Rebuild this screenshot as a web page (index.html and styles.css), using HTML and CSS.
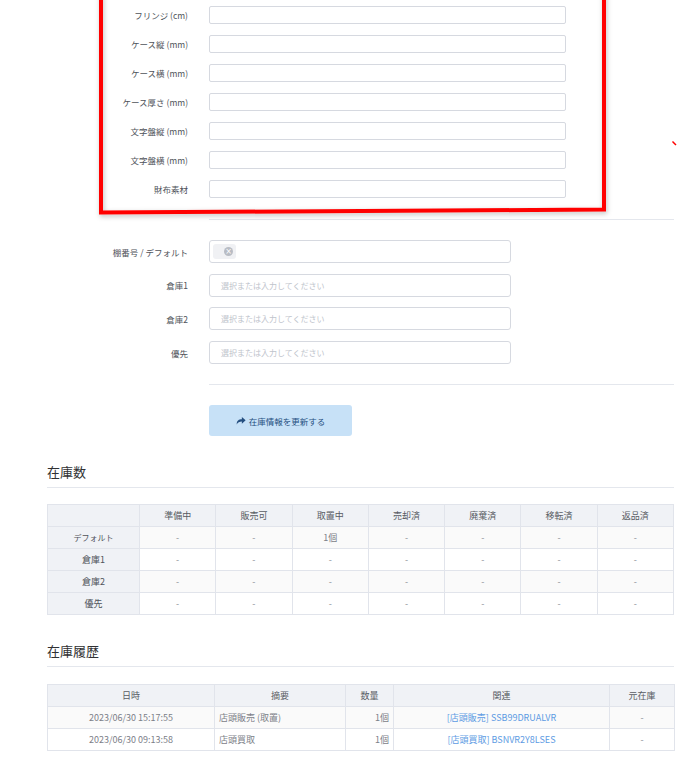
FILE: index.html
```html
<!DOCTYPE html>
<html>
<head>
    <title>在庫情報</title>
    <meta charset="utf-8">
    <link rel="stylesheet" href="styles.css">
</head>
<body>
    <div class="page">
        <!-- 仕様 -->
        <div class="spec-form">
            <div class="form-row"><label>フリンジ (cm)</label><input type="text"></div>
            <div class="form-row"><label>ケース縦 (mm)</label><input type="text"></div>
            <div class="form-row"><label>ケース横 (mm)</label><input type="text"></div>
            <div class="form-row"><label>ケース厚さ (mm)</label><input type="text"></div>
            <div class="form-row"><label>文字盤縦 (mm)</label><input type="text"></div>
            <div class="form-row"><label>文字盤横 (mm)</label><input type="text"></div>
            <div class="form-row"><label>財布素材</label><input type="text"></div>
        </div>

        <div class="divider"></div>

        <!-- 棚番号 -->
        <div class="stock-form">
            <div class="form-row">
                <label>棚番号 / デフォルト</label>
                <div class="select-box">
                    <span class="tag"><span class="tag-close">×</span></span>
                </div>
            </div>
            <div class="form-row">
                <label>倉庫1</label>
                <div class="select-box"><span class="placeholder">選択または入力してください</span></div>
            </div>
            <div class="form-row">
                <label>倉庫2</label>
                <div class="select-box"><span class="placeholder">選択または入力してください</span></div>
            </div>
            <div class="form-row">
                <label>優先</label>
                <div class="select-box"><span class="placeholder">選択または入力してください</span></div>
            </div>
        </div>

        <div class="divider"></div>

        <div class="button-row">
            <button class="update-btn">
                <svg width="10" height="9" viewBox="0 0 14 12"><path d="M1 11.5 C1 6 4 4.2 8.2 4.2 V1 L13.5 5.8 L8.2 10.6 V7.4 C4.8 7.4 2.6 8.6 1 11.5 Z" fill="#254f80"/></svg>
                在庫情報を更新する
            </button>
        </div>

        <!-- 在庫数 -->
        <h3 class="section-title">在庫数</h3>
        <table class="data-table stock-table">
            <thead>
                <tr>
                    <th class="row-head"></th>
                    <th>準備中</th><th>販売可</th><th>取置中</th><th>売却済</th><th>廃棄済</th><th>移転済</th><th>返品済</th>
                </tr>
            </thead>
            <tbody>
                <tr class="striped">
                    <th class="row-head small">デフォルト</th>
                    <td>-</td><td>-</td><td class="num">1個</td><td>-</td><td>-</td><td>-</td><td>-</td>
                </tr>
                <tr>
                    <th class="row-head">倉庫1</th>
                    <td>-</td><td>-</td><td>-</td><td>-</td><td>-</td><td>-</td><td>-</td>
                </tr>
                <tr class="striped">
                    <th class="row-head">倉庫2</th>
                    <td>-</td><td>-</td><td>-</td><td>-</td><td>-</td><td>-</td><td>-</td>
                </tr>
                <tr>
                    <th class="row-head">優先</th>
                    <td>-</td><td>-</td><td>-</td><td>-</td><td>-</td><td>-</td><td>-</td>
                </tr>
            </tbody>
        </table>

        <!-- 在庫履歴 -->
        <h3 class="section-title">在庫履歴</h3>
        <table class="data-table history-table">
            <colgroup>
                <col class="c-date"><col class="c-summary"><col class="c-qty"><col class="c-link"><col class="c-orig">
            </colgroup>
            <thead>
                <tr>
                    <th>日時</th>
                    <th>摘要</th>
                    <th>数量</th>
                    <th>関連</th>
                    <th>元在庫</th>
                </tr>
            </thead>
            <tbody>
                <tr class="striped">
                    <td class="num">2023/06/30 15:17:55</td>
                    <td class="left">店頭販売 (取置)</td>
                    <td class="right">1個</td>
                    <td><a href="#">[店頭販売] SSB99DRUALVR</a></td>
                    <td>-</td>
                </tr>
                <tr>
                    <td class="num">2023/06/30 09:13:58</td>
                    <td class="left">店頭買取</td>
                    <td class="right">1個</td>
                    <td><a href="#">[店頭買取] BSNVR2Y8LSES</a></td>
                    <td>-</td>
                </tr>
            </tbody>
        </table>
    </div>

    <!-- 赤枠の注釈 -->
    <svg class="annotation" width="688" height="760">
        <defs>
            <filter id="shade" x="-10%" y="-10%" width="120%" height="130%">
                <feDropShadow dx="1" dy="2" stdDeviation="2.5" flood-color="#000" flood-opacity="0.25"/>
            </filter>
        </defs>
        <polyline points="101,-6 101,212.5 604,209.5 604,-6" fill="none" stroke="#ff0000" stroke-width="4" filter="url(#shade)"/>
        <line x1="672.5" y1="141.5" x2="676" y2="145" stroke="#ff0000" stroke-width="1.5"/>
    </svg>
</body>
</html>
```

FILE: styles.css
```css
body {
    margin: 0;
    padding: 0;
    background: #fff;
    color: #606266;
    font-family: "Noto Sans CJK JP", "Noto Sans", sans-serif;
    width: 688px;
    height: 760px;
    overflow: hidden;
    position: relative;
}

.page {
    padding: 0 14px 0 47px;
}

/* フォーム */
.form-row {
    display: grid;
    grid-template-columns: 141px 357px;
    column-gap: 21px;
    align-items: center;
}

.form-row label {
    text-align: right;
    font-size: 8.5px;
    color: #4f535a;
    white-space: nowrap;
}

.spec-form {
    padding-top: 6px;
    display: flex;
    flex-direction: column;
    gap: 11px;
}

.spec-form .form-row {
    height: 18px;
}

.spec-form input {
    box-sizing: border-box;
    height: 18px;
    width: 357px;
    margin: 0;
    border: 1px solid #d6d9e0;
    border-radius: 2px;
    background: #fff;
}

.divider {
    margin-left: 162px;
    height: 1px;
    background: #e4e7ed;
}

.spec-form + .divider {
    margin-top: 21px;
}

.stock-form {
    margin-top: 20px;
    display: flex;
    flex-direction: column;
    gap: 10.7px;
}

.stock-form .form-row {
    grid-template-columns: 141px 302px;
    height: 23px;
}

.stock-form + .divider {
    margin-top: 20px;
}

.select-box {
    box-sizing: border-box;
    height: 23px;
    border: 1px solid #d6d9e0;
    border-radius: 3px;
    display: flex;
    align-items: center;
    padding: 0 3px;
}

.placeholder {
    font-size: 8px;
    color: #c0c4cc;
    padding-left: 8px;
}

.tag {
    box-sizing: border-box;
    width: 23px;
    height: 15px;
    background: #f0f1f4;
    border-radius: 3px;
    display: flex;
    align-items: center;
    justify-content: flex-end;
    padding-right: 3px;
}

.tag-close {
    width: 9px;
    height: 9px;
    border-radius: 50%;
    background: #b8bcc4;
    color: #fff;
    font-size: 8px;
    line-height: 9px;
    text-align: center;
    font-family: "DejaVu Sans", sans-serif;
}

/* ボタン */
.button-row {
    margin-top: 20px;
    padding-left: 162px;
}

.update-btn {
    width: 143px;
    height: 31px;
    background: #c7e1f7;
    border: none;
    border-radius: 3px;
    color: #254f80;
    font-family: "Noto Sans CJK JP", "Noto Sans", sans-serif;
    font-size: 8.5px;
    display: flex;
    align-items: center;
    justify-content: center;
    gap: 3px;
    padding: 0;
}

/* 見出し */
.section-title {
    margin: 27px 0 0;
    padding-bottom: 6px;
    border-bottom: 1px solid #e4e7ed;
    font-size: 13px;
    font-weight: normal;
    line-height: 18px;
    color: #303133;
}

/* テーブル */
.data-table {
    width: 627px;
    border-collapse: collapse;
    table-layout: fixed;
    font-size: 9px;
}

.stock-table {
    margin-top: 16px;
}

.history-table {
    margin-top: 17px;
}

.data-table th,
.data-table td {
    border: 1px solid #e1e4eb;
    height: 21px;
    padding: 0 4px;
    text-align: center;
    font-weight: normal;
    color: #8c9097;
    white-space: nowrap;
    overflow: hidden;
}

.data-table thead th {
    background: #f0f2f6;
    color: #585c63;
}

.data-table .row-head {
    width: 83px;
    background: #f0f2f6;
    color: #4f535a;
}

.data-table .row-head.small {
    font-size: 8px;
}

.data-table tr.striped td {
    background: #fafafa;
}

.data-table td.num {
    color: #7c8088;
}

.data-table td.left {
    text-align: left;
    color: #7c8088;
}

.data-table td.right {
    text-align: right;
    color: #7c8088;
}

.data-table a {
    color: #5d9be3;
    text-decoration: none;
}

.c-date { width: 167px; }
.c-summary { width: 131px; }
.c-qty { width: 48px; }
.c-link { width: 216px; }
.c-orig { width: 65px; }

/* 注釈 */
.annotation {
    position: absolute;
    top: 0;
    left: 0;
    pointer-events: none;
}
```
